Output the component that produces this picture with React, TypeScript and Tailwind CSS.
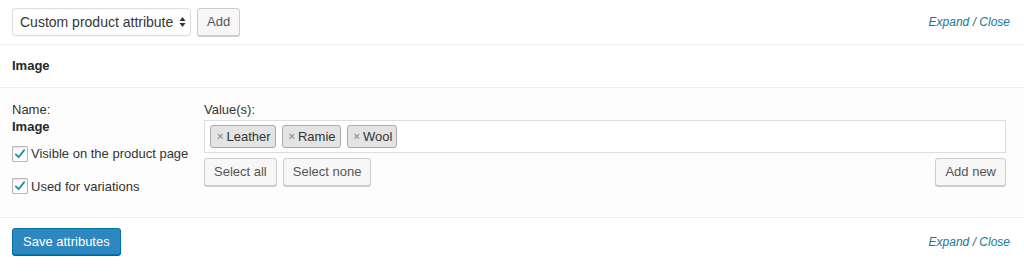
import React from "react";

function Check() {
  return (
    <span className="flex h-[16px] w-[16px] items-center justify-center rounded-[1px] border border-[#b4b9be] bg-white shadow-[inset_0_1px_2px_rgba(0,0,0,0.1)]">
      <svg width="14" height="14" viewBox="0 0 20 20">
        <path d="M4 10.5 L8 14.5 L16 4.5" fill="none" stroke="#1e8cbe" strokeWidth="2.6" strokeLinecap="round" strokeLinejoin="round" />
      </svg>
    </span>
  );
}

function ExpandClose() {
  return (
    <div className="text-[12px] italic">
      <span className="text-[#21759b]">Expand</span>
      <span className="text-[#555]"> / </span>
      <span className="text-[#21759b]">Close</span>
    </div>
  );
}

function Tag({ label }: { label: string }) {
  return (
    <span className="flex h-[23px] items-center gap-[3px] rounded-[3px] border border-[#aaa] bg-[#e4e4e4] pl-[6px] pr-[4px] text-[13px] text-[#333]">
      <span className="text-[11px] font-bold text-[#999]">×</span>
      {label}
    </span>
  );
}

const btn =
  "flex items-center rounded-[3px] border border-[#ccc] bg-[#f7f7f7] text-[13px] text-[#555] shadow-[0_1px_0_#ccc]";

export default function App() {
  return (
    <div className="h-[276px] w-[1024px] bg-white text-[#23282d]" style={{ fontFamily: "'Liberation Sans', Arial, sans-serif" }}>
      <div className="flex h-[45px] items-start justify-between border-b border-[#eee] pl-[12px] pr-[14px] pt-[8px]">
        <div className="flex gap-[6px]">
          <div className="flex h-[28px] w-[179px] items-center justify-between rounded-[4px] border border-[#ddd] bg-white pl-[7px] pr-[4px] text-[14px] text-[#32373c] shadow-[0_1px_1px_rgba(0,0,0,0.04)]">
            <span>Custom product attribute</span>
            <svg width="7" height="12" viewBox="0 0 7 12">
              <path d="M3.5 1 L6.5 5 H0.5 Z" fill="#333" />
              <path d="M3.5 11 L6.5 7 H0.5 Z" fill="#333" />
            </svg>
          </div>
          <button className={`${btn} h-[28px] px-[9px]`}>Add</button>
        </div>
        <div className="pt-[5px]">
          <ExpandClose />
        </div>
      </div>
      <div className="flex h-[43px] items-center border-b border-[#eee] px-[12px] text-[13px] font-bold text-[#23282d]">
        Image
      </div>
      <div className="flex h-[130px] gap-[15px] border-b border-[#eee] bg-[#fdfdfd] pl-[12px] pr-[18px] pt-[14px]">
        <div className="flex w-[177px] flex-col text-[13px]">
          <div className="leading-[16px] text-[#333]">Name:</div>
          <div className="mt-[1px] font-bold leading-[16px]">Image</div>
          <label className="mt-[9px] flex items-center gap-[3px] text-[#333]">
            <Check />
            <span>Visible on the product page</span>
          </label>
          <label className="mt-[13px] flex items-center gap-[3px] text-[#333]">
            <Check />
            <span>Used for variations</span>
          </label>
        </div>
        <div className="flex flex-1 flex-col text-[13px]">
          <div className="leading-[16px] text-[#333]">Value(s):</div>
          <div className="mt-[2px] flex h-[33px] items-center gap-[6px] border border-[#ddd] bg-white px-[5px]">
            <Tag label="Leather" />
            <Tag label="Ramie" />
            <Tag label="Wool" />
          </div>
          <div className="mt-[5px] flex justify-between">
            <div className="flex gap-[6px]">
              <button className={`${btn} h-[28px] px-[9px]`}>Select all</button>
              <button className={`${btn} h-[28px] px-[9px]`}>Select none</button>
            </div>
            <button className={`${btn} h-[28px] px-[9px]`}>Add new</button>
          </div>
        </div>
      </div>
      <div className="flex items-start justify-between pl-[12px] pr-[14px] pt-[10px]">
        <button className="flex h-[27px] items-center rounded-[3px] border border-[#0073aa] bg-[#2e87bf] px-[10px] text-[13px] text-white shadow-[0_1px_0_#006799]">
          Save attributes
        </button>
        <div className="pt-[5px]">
          <ExpandClose />
        </div>
      </div>
    </div>
  );
}
